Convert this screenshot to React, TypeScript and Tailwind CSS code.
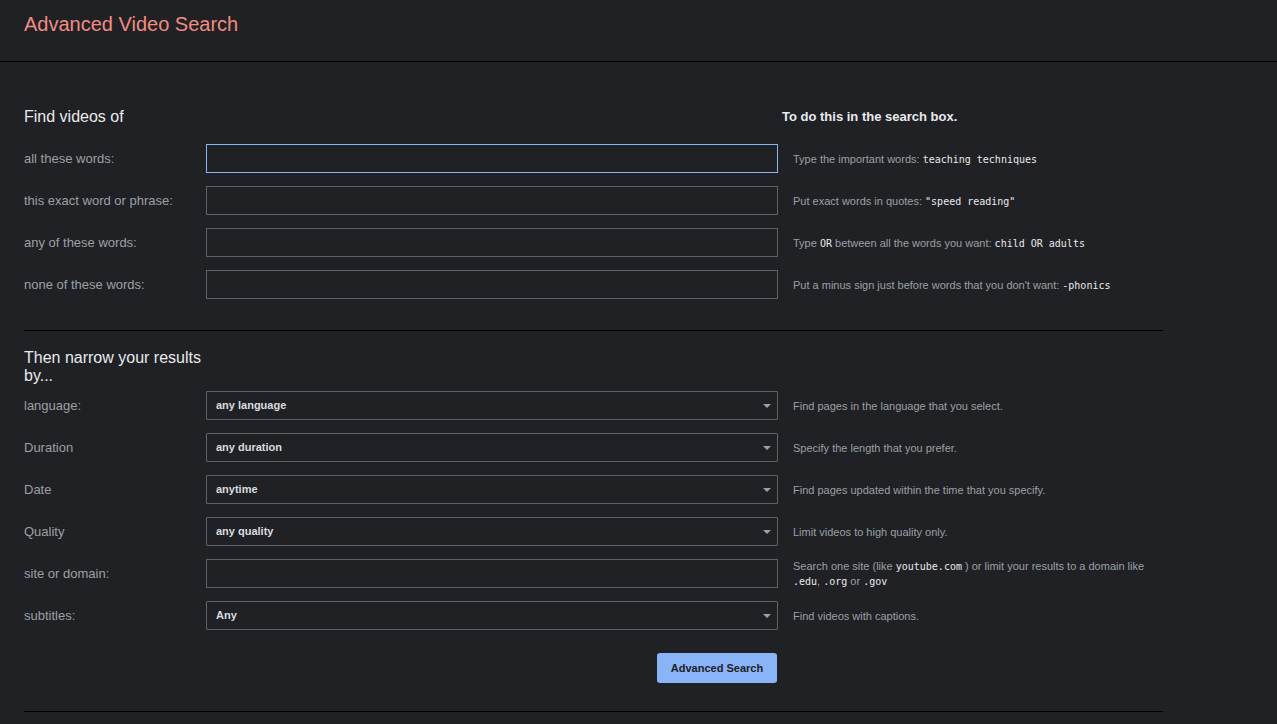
import React from "react";

const findRows: { label: string; hint: React.ReactNode; focused?: boolean }[] = [
  {
    label: "all these words:",
    focused: true,
    hint: (
      <>
        Type the important words: <Code>teaching techniques</Code>
      </>
    ),
  },
  {
    label: "this exact word or phrase:",
    hint: (
      <>
        Put exact words in quotes: <Code>"speed reading"</Code>
      </>
    ),
  },
  {
    label: "any of these words:",
    hint: (
      <>
        Type <Code>OR</Code> between all the words you want: <Code>child OR adults</Code>
      </>
    ),
  },
  {
    label: "none of these words:",
    hint: (
      <>
        Put a minus sign just before words that you don't want: <Code>-phonics</Code>
      </>
    ),
  },
];

const narrowRows: { label: string; value?: string; hint: React.ReactNode }[] = [
  { label: "language:", value: "any language", hint: "Find pages in the language that you select." },
  { label: "Duration", value: "any duration", hint: "Specify the length that you prefer." },
  { label: "Date", value: "anytime", hint: "Find pages updated within the time that you specify." },
  { label: "Quality", value: "any quality", hint: "Limit videos to high quality only." },
  {
    label: "site or domain:",
    hint: (
      <>
        Search one site (like <Code>youtube.com</Code> ) or limit your results to a domain like{" "}
        <Code>.edu</Code>, <Code>.org</Code> or <Code>.gov</Code>
      </>
    ),
  },
  { label: "subtitles:", value: "Any", hint: "Find videos with captions." },
];

function Code({ children }: { children: React.ReactNode }) {
  return (
    <span className="text-[#e8eaed] text-[10px] leading-[14px] font-['DejaVu_Sans_Mono',monospace]">
      {children}
    </span>
  );
}

function TextBox({ focused }: { focused?: boolean }) {
  return (
    <input
      type="text"
      className={
        "w-full h-[29px] bg-transparent border px-2 text-[13px] text-[#e8eaed] outline-none " +
        (focused ? "border-[#8ab4f8]" : "border-[#5f6368]")
      }
    />
  );
}

function SelectBox({ value }: { value: string }) {
  return (
    <div className="w-full h-[29px] border border-[#5f6368] rounded-[1px] flex items-center justify-between pl-[9px] pr-[4px]">
      <span className="text-[11px] font-bold text-[#dadce0]">{value}</span>
      <svg width="10" height="6" viewBox="0 0 10 6" className="mr-[1px]">
        <path d="M1 1h8L5 5z" fill="#9aa0a6" />
      </svg>
    </div>
  );
}

export default function App() {
  return (
    <div className="min-h-screen bg-[#202124] font-['Liberation_Sans',Arial,sans-serif] overflow-hidden">
      <header className="h-[62px] border-b border-black pl-6 pt-[12px]">
        <h1 className="text-[20px] leading-[24px] text-[#f28b82]">Advanced Video Search</h1>
      </header>

      <main className="ml-6 w-[1139px]">
        <section className="pt-[46px] pb-[31px] border-b border-black">
          <div className="flex items-center h-[18px] mb-[18px]">
            <h2 className="w-[758px] text-[16px] leading-[18px] text-[#e8eaed]">Find videos of</h2>
            <span className="text-[13px] font-bold text-[#e8eaed]">To do this in the search box.</span>
          </div>
          <div className="grid grid-cols-[182px_572px_1fr] gap-y-[13px]">
            {findRows.map((r) => (
              <React.Fragment key={r.label}>
                <label className="flex items-center h-[29px] text-[13px] text-[#9aa0a6]">{r.label}</label>
                <TextBox focused={r.focused} />
                <div className="flex items-center pl-[15px] pt-px text-[11px] leading-[14px] text-[#9aa0a6]">
                  <span>{r.hint}</span>
                </div>
              </React.Fragment>
            ))}
          </div>
        </section>

        <section className="pt-[18px] pb-[28px] border-b border-black">
          <h2 className="w-[182px] text-[16px] leading-[18px] text-[#e8eaed] mb-[6px]">
            Then narrow your results by...
          </h2>
          <div className="grid grid-cols-[182px_572px_1fr] gap-y-[13px]">
            {narrowRows.map((r) => (
              <React.Fragment key={r.label}>
                <label className="flex items-center h-[29px] text-[13px] text-[#9aa0a6]">{r.label}</label>
                {r.value ? <SelectBox value={r.value} /> : <TextBox />}
                <div className="flex items-center h-[29px] pl-[15px] text-[11px] leading-[14px] text-[#9aa0a6]">
                  <span>{r.hint}</span>
                </div>
              </React.Fragment>
            ))}
            <div />
            <div className="flex justify-end pt-[10px] pr-px">
              <button className="h-[30px] w-[120px] rounded-[3px] bg-[#8ab4f8] text-[#202124] text-[11px] font-bold">
                Advanced Search
              </button>
            </div>
            <div />
          </div>
        </section>
      </main>
    </div>
  );
}
